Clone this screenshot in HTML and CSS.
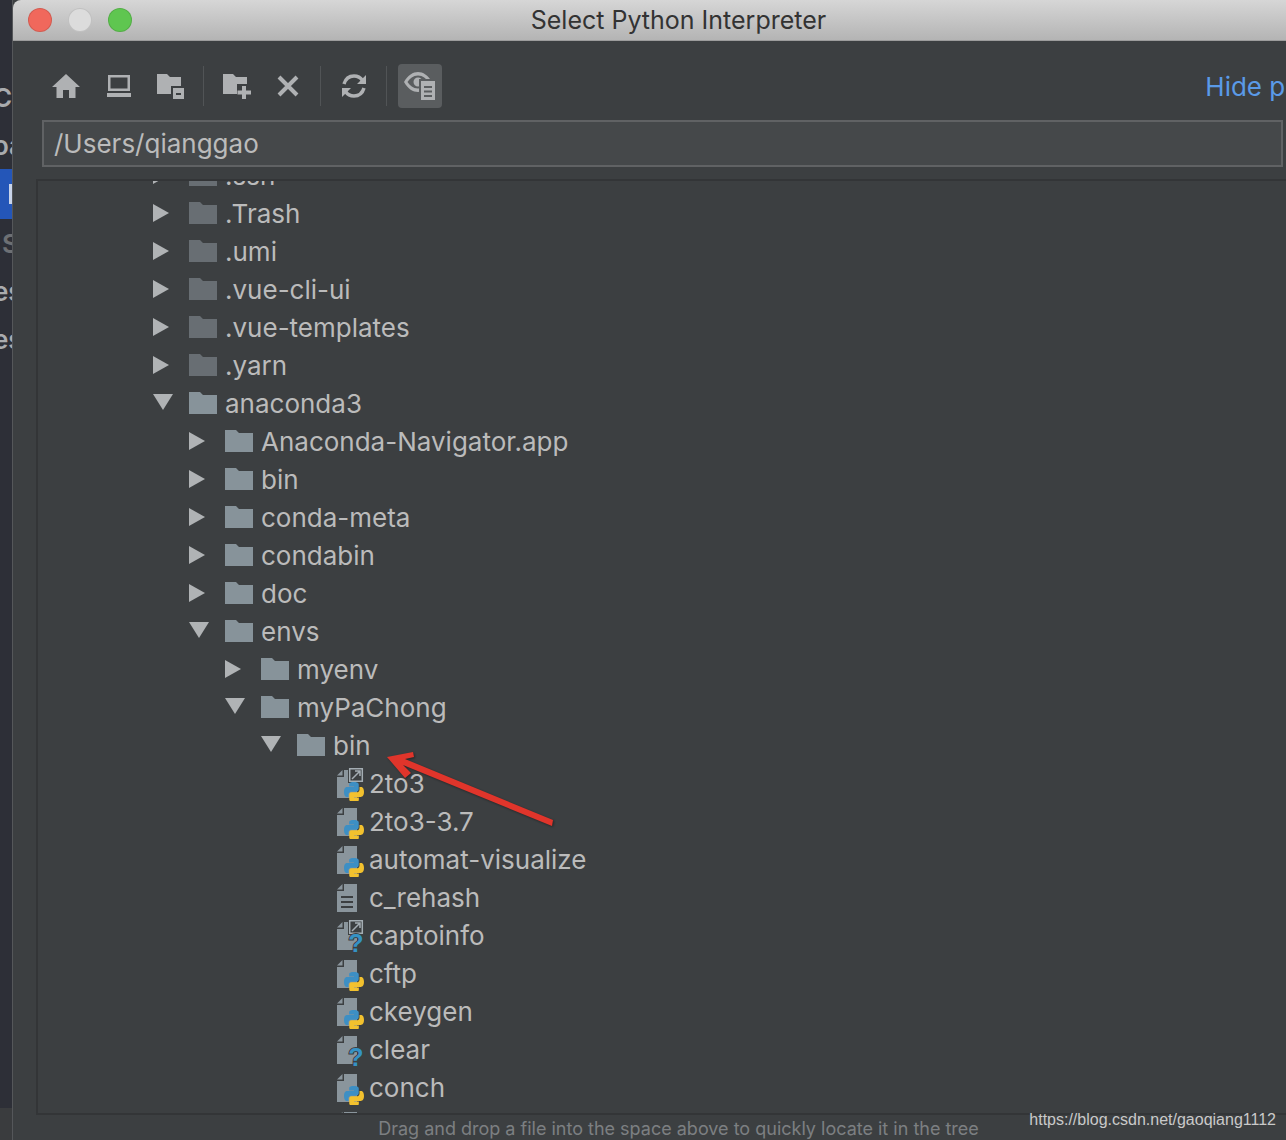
FILE: index.html
```html
<!DOCTYPE html>
<html lang="en">
  <head>
    <meta charset="UTF-8" />
    <title>Select Python Interpreter</title>
    <link rel="stylesheet" href="styles.css">
  </head>

  <body>
    <!-- icons used more than once -->
    <svg class="defs" width="0" height="0">
      <symbol id="py" viewBox="0 0 24 24">
        <path fill="#3d8fc4" d="M11.9 0C5.8 0 6.200 2.600 6.200 2.600v2.700h5.800v.8H3.900S0 5.700 0 11.900s3.400 6 3.400 6h2v-2.900s-.1-3.400 3.400-3.400h5.700s3.200.1 3.200-3.100V3.200S18.200 0 11.900 0z"/>
        <path fill="#f2c12e" d="M12.100 24c6.100 0 5.700-2.600 5.700-2.600v-2.700H12v-.8h8.100S24 18.300 24 12.100s-3.400-6-3.400-6h-2V9s.1 3.400-3.400 3.400H9.500s-3.200-.1-3.200 3.100v5.300S5.800 24 12.100 24z"/>
      </symbol>
      <symbol id="file" viewBox="0 0 28 36">
        <path fill="#8a959c" d="M7 5H20V33H0V12H7Z"/>
        <path fill="#8a959c" d="M0 10.500 5.500 5V10.500Z"/>
      </symbol>
      <symbol id="link" viewBox="0 0 28 36">
        <path fill="#3c3f41" d="M11 2H27V18H11Z"/>
        <path fill="none" stroke="#a4adb3" stroke-width="1.500" d="M12.700 3.700H25.300V16.300H12.700Z"/>
        <path fill="none" stroke="#a4adb3" stroke-width="1.500" d="M15 14 23 6M18 6H23V11"/>
      </symbol>
      <symbol id="mini-folder" viewBox="0 0 28 22">
        <path d="M0 0H11L14 3H28V22H0Z"/>
      </symbol>
    </svg>

    <!-- the settings window behind the dialog -->
    <aside class="behind">
      <div class="behind__row">Cc</div>
      <div class="behind__row">oa</div>
      <div class="behind__row behind__row--selected"><span class="behind__caret"></span></div>
      <div class="behind__row behind__row--dim">S</div>
      <div class="behind__row">es</div>
      <div class="behind__row">es</div>
      <div class="behind__foot"></div>
    </aside>

    <main class="dialog">
      <header class="titlebar">
        <div class="lights">
          <span class="light light--red"></span>
          <span class="light light--grey"></span>
          <span class="light light--green"></span>
        </div>
        <h1 class="titlebar__title">Select Python Interpreter</h1>
      </header>

      <div class="toolbar">
        <div class="tool-group tool-group--first">
          <button class="tool">
            <svg width="28" height="24" viewBox="0 0 28 24"><path d="M14 0 28 13H23.500V24H17V16H11V24H4.500V13H0Z"/></svg>
          </button>
          <button class="tool">
            <svg width="26" height="24" viewBox="0 0 26 24"><path fill-rule="evenodd" d="M2 1H24V17H2ZM4.500 3.500V14.500H21.500V3.500ZM1 19H25V23H1Z"/></svg>
          </button>
          <button class="tool">
            <svg width="28" height="26" viewBox="0 0 28 26"><path d="M0 1H10L13 4H24V21H0Z"/><path fill="#3c3f41" d="M14 13H28V26H14Z"/><path d="M16 15H27V26H16Z"/><path fill="#3c3f41" d="M19 20H24V22H19Z"/></svg>
          </button>
        </div>
        <span class="tool-sep"></span>
        <div class="tool-group">
          <button class="tool">
            <svg width="28" height="26" viewBox="0 0 28 26"><path d="M0 1H10L13 4H24V21H0Z"/><path fill="#3c3f41" d="M14 11H28V26H14Z"/><path d="M19 13H23V17.500H28V21.500H23V26H19V21.500H14.500V17.500H19Z"/></svg>
          </button>
          <button class="tool">
            <svg width="22" height="22" viewBox="0 0 22 22"><path fill="none" stroke="#afb1b3" stroke-width="4" d="M2 2 20 20M20 2 2 20"/></svg>
          </button>
        </div>
        <span class="tool-sep"></span>
        <div class="tool-group">
          <button class="tool">
            <svg width="26" height="26" viewBox="0 0 26 26"><path fill="none" stroke="#afb1b3" stroke-width="3.500" d="M3 11C4.500 6 8.500 3 13 3 16.500 3 19.500 4.500 21.500 7.500M23 15C21.500 20 17.500 23 13 23 9.500 23 6.500 21.500 4.500 18.500"/><path d="M25 2V11H16ZM1 24V15H10Z"/></svg>
          </button>
        </div>
        <span class="tool-sep"></span>
        <button class="tool tool--active">
          <svg width="32" height="28" viewBox="0 0 32 28"><path fill-rule="evenodd" d="M0 10C4 3 9 0 14 0 19 0 24 3 28 10 24 17 19 20 14 20 9 20 4 17 0 10ZM14 3.500C9 3.500 6 6.500 3.500 10 6 13.500 9 16.500 14 16.500 19 16.500 22 13.500 24.500 10 22 6.500 19 3.500 14 3.500ZM14 5.500A4.500 4.500 0 1 1 14 14.500 4.500 4.500 0 0 1 14 5.500Z"/><path fill="#5a5d5f" d="M15 7H32V28H15Z"/><path fill-rule="evenodd" d="M17 9H31V28H17ZM20 14V16H28V14ZM20 18.500V20.500H28V18.500ZM20 23V25H28V23Z"/></svg>
        </button>
        <a class="toolbar__link">Hide path</a>
      </div>

      <div class="path">/Users/qianggao</div>

      <section class="tree">
        <ul class="tree__root">
          <li><div class="row"><span class="arrow arrow--right"></span><svg class="folder folder--hidden" width="28" height="22"><use href="#mini-folder"/></svg><span class="row__name">.ssh</span></div></li>
          <li><div class="row"><span class="arrow arrow--right"></span><svg class="folder folder--hidden" width="28" height="22"><use href="#mini-folder"/></svg><span class="row__name">.Trash</span></div></li>
          <li><div class="row"><span class="arrow arrow--right"></span><svg class="folder folder--hidden" width="28" height="22"><use href="#mini-folder"/></svg><span class="row__name">.umi</span></div></li>
          <li><div class="row"><span class="arrow arrow--right"></span><svg class="folder folder--hidden" width="28" height="22"><use href="#mini-folder"/></svg><span class="row__name">.vue-cli-ui</span></div></li>
          <li><div class="row"><span class="arrow arrow--right"></span><svg class="folder folder--hidden" width="28" height="22"><use href="#mini-folder"/></svg><span class="row__name">.vue-templates</span></div></li>
          <li><div class="row"><span class="arrow arrow--right"></span><svg class="folder folder--hidden" width="28" height="22"><use href="#mini-folder"/></svg><span class="row__name">.yarn</span></div></li>
          <li>
            <div class="row"><span class="arrow arrow--down"></span><svg class="folder" width="28" height="22"><use href="#mini-folder"/></svg><span class="row__name">anaconda3</span></div>
            <ul>
              <li><div class="row"><span class="arrow arrow--right"></span><svg class="folder" width="28" height="22"><use href="#mini-folder"/></svg><span class="row__name">Anaconda-Navigator.app</span></div></li>
              <li><div class="row"><span class="arrow arrow--right"></span><svg class="folder" width="28" height="22"><use href="#mini-folder"/></svg><span class="row__name">bin</span></div></li>
              <li><div class="row"><span class="arrow arrow--right"></span><svg class="folder" width="28" height="22"><use href="#mini-folder"/></svg><span class="row__name">conda-meta</span></div></li>
              <li><div class="row"><span class="arrow arrow--right"></span><svg class="folder" width="28" height="22"><use href="#mini-folder"/></svg><span class="row__name">condabin</span></div></li>
              <li><div class="row"><span class="arrow arrow--right"></span><svg class="folder" width="28" height="22"><use href="#mini-folder"/></svg><span class="row__name">doc</span></div></li>
              <li>
                <div class="row"><span class="arrow arrow--down"></span><svg class="folder" width="28" height="22"><use href="#mini-folder"/></svg><span class="row__name">envs</span></div>
                <ul>
                  <li><div class="row"><span class="arrow arrow--right"></span><svg class="folder" width="28" height="22"><use href="#mini-folder"/></svg><span class="row__name">myenv</span></div></li>
                  <li>
                    <div class="row"><span class="arrow arrow--down"></span><svg class="folder" width="28" height="22"><use href="#mini-folder"/></svg><span class="row__name">myPaChong</span></div>
                    <ul>
                      <li>
                        <div class="row"><span class="arrow arrow--down"></span><svg class="folder" width="28" height="22"><use href="#mini-folder"/></svg><span class="row__name">bin</span></div>
                        <ul>
                          <li><div class="row"><span class="arrow"></span><svg class="file" width="28" height="36"><use href="#file"/><use href="#link"/><use href="#py" x="7" y="17" width="20" height="20"/></svg><span class="row__name">2to3</span></div></li>
                          <li><div class="row"><span class="arrow"></span><svg class="file" width="28" height="36"><use href="#file"/><use href="#py" x="7" y="17" width="20" height="20"/></svg><span class="row__name">2to3-3.7</span></div></li>
                          <li><div class="row"><span class="arrow"></span><svg class="file" width="28" height="36"><use href="#file"/><use href="#py" x="7" y="17" width="20" height="20"/></svg><span class="row__name">automat-visualize</span></div></li>
                          <li><div class="row"><span class="arrow"></span><svg class="file" width="28" height="36"><use href="#file"/><path fill="#3c3f41" d="M4 17H16V19H4ZM4 22H16V24H4ZM4 27H16V29H4Z"/></svg><span class="row__name">c_rehash</span></div></li>
                          <li><div class="row"><span class="arrow"></span><svg class="file" width="28" height="36"><use href="#file"/><use href="#link"/><text class="file__unknown" x="19" y="35">?</text></svg><span class="row__name">captoinfo</span></div></li>
                          <li><div class="row"><span class="arrow"></span><svg class="file" width="28" height="36"><use href="#file"/><use href="#py" x="7" y="17" width="20" height="20"/></svg><span class="row__name">cftp</span></div></li>
                          <li><div class="row"><span class="arrow"></span><svg class="file" width="28" height="36"><use href="#file"/><use href="#py" x="7" y="17" width="20" height="20"/></svg><span class="row__name">ckeygen</span></div></li>
                          <li><div class="row"><span class="arrow"></span><svg class="file" width="28" height="36"><use href="#file"/><text class="file__unknown" x="19" y="35">?</text></svg><span class="row__name">clear</span></div></li>
                          <li><div class="row"><span class="arrow"></span><svg class="file" width="28" height="36"><use href="#file"/><use href="#py" x="7" y="17" width="20" height="20"/></svg><span class="row__name">conch</span></div></li>
                          <li><div class="row"><span class="arrow"></span><svg class="file" width="28" height="36"><use href="#file"/></svg><span class="row__name">conda</span></div></li>
                        </ul>
                      </li>
                    </ul>
                  </li>
                </ul>
              </li>
            </ul>
          </li>
        </ul>
      </section>

      <p class="hint">Drag and drop a file into the space above to quickly locate it in the tree</p>
    </main>

    <!-- red arrow drawn on top of the screenshot -->
    <svg class="annotation" width="190" height="90" viewBox="380 745 190 90">
      <path fill="#e0352b" d="M387 757 413 752 414 757 405 759 553 820 552 826 403 765 411 773 405 778Z"/>
    </svg>

    <div class="watermark">https://blog.csdn.net/gaoqiang1112</div>
  </body>
</html>
```

FILE: styles.css
```css
html,
body {
  height: 100%;
  overflow: hidden;
}

body {
  display: flex;
  margin: 0;
  width: 1286px;
  height: 1140px;
  position: relative;
  background-color: #3c3f41;
  font-family: Inter, "Liberation Sans", sans-serif;
}

.defs {
  position: absolute;
}

/* window behind */
.behind {
  flex: 0 0 12px;
  display: flex;
  flex-direction: column;
  padding-top: 73px;
  overflow: hidden;
  background-color: #2d2f37;
  color: #a9abae;
  font-size: 26px;
  font-weight: 600;
  box-sizing: border-box;
}

.behind__row {
  flex: 0 0 48px;
  display: flex;
  align-items: center;
  margin-left: -7px;
  white-space: nowrap;
}

.behind__row--selected {
  flex-basis: 50px;
  margin-left: 0;
  justify-content: flex-end;
  background-color: #2456b8;
}

.behind__row--dim {
  margin-left: 2px;
  color: #6d7074;
}

.behind__caret {
  width: 3px;
  height: 20px;
  background-color: #c9d4ea;
}

.behind__foot {
  margin-top: auto;
  height: 32px;
  background-color: #3a3c3e;
}

/* dialog */
.dialog {
  flex: 0 0 1332px;
  display: flex;
  flex-direction: column;
  box-sizing: border-box;
  background-color: #3c3f41;
  border-left: 1px solid #55575a;
}

.titlebar {
  flex: 0 0 41px;
  display: flex;
  align-items: center;
  position: relative;
  box-sizing: border-box;
  background: linear-gradient(#d6d6d6, #b4b4b4);
  border-bottom: 1px solid #9c9c9c;
  border-top-left-radius: 8px;
}

.lights {
  display: flex;
  gap: 16px;
  padding-left: 15px;
}

.light {
  width: 24px;
  height: 24px;
  border-radius: 50%;
  box-sizing: border-box;
  border: 1px solid rgba(0, 0, 0, 0.12);
}

.light--red {
  background-color: #f0685c;
}

.light--grey {
  background-color: #dcdcdc;
}

.light--green {
  background-color: #5fc650;
}

.titlebar__title {
  position: absolute;
  left: 0;
  right: 0;
  margin: 0;
  text-align: center;
  font-size: 25px;
  font-weight: 400;
  color: #333;
}

.toolbar {
  display: flex;
  align-items: center;
  height: 44px;
  margin-top: 23px;
  padding-left: 31px;
}

.tool-group {
  display: flex;
  gap: 7px;
}

.tool-group--first {
  gap: 8.5px;
}

.tool {
  width: 44px;
  height: 44px;
  display: flex;
  align-items: center;
  justify-content: center;
  padding: 0;
  border: none;
  border-radius: 4px;
  background: none;
}

.tool svg {
  fill: #afb1b3;
}

.tool--active {
  background-color: #5a5d5f;
}

.tool-sep {
  width: 1px;
  height: 40px;
  margin: 0 11px 0 10px;
  background-color: #515456;
}

.toolbar__link {
  margin-left: auto;
  padding-right: 20px;
  font-size: 26px;
  color: #5a9ae8;
}

.path {
  width: 1241px;
  height: 47px;
  margin: 12px 0 0 29px;
  padding-left: 10px;
  box-sizing: border-box;
  display: flex;
  align-items: center;
  background-color: #45484a;
  border: 2px solid #606264;
  font-size: 26px;
  color: #bbbbbb;
}

.tree {
  flex: 0 0 936px;
  margin: 12px 0 0 23px;
  overflow: hidden;
  box-sizing: border-box;
  border: solid #333537;
  border-width: 2px 0 2px 2px;
}

.tree ul {
  list-style: none;
  margin: 0;
  padding: 0 0 0 36px;
}

.tree .tree__root {
  margin-top: -25px;
  padding-left: 114px;
}

.row {
  display: flex;
  align-items: center;
  height: 38px;
  font-size: 26px;
  color: #bbbbbb;
  white-space: nowrap;
}

.row__name {
  margin-left: 8px;
}

.arrow {
  flex: 0 0 37px;
  box-sizing: border-box;
  width: 37px;
  height: 0;
  position: relative;
}

.arrow--right::before,
.arrow--down::before {
  content: "";
  position: absolute;
  width: 0;
  height: 0;
  border-style: solid;
  border-color: transparent;
}

.arrow--right::before {
  left: 1px;
  top: -9px;
  border-width: 9px 0 9px 16px;
  border-left-color: #b0b3b5;
}

.arrow--down::before {
  left: 1px;
  top: -9px;
  border-width: 16px 10px 0 10px;
  border-top-color: #b0b3b5;
}

.folder {
  flex: 0 0 28px;
  fill: #87939a;
}

.folder--hidden {
  fill: #686e73;
}

.file {
  flex: 0 0 28px;
  margin-left: 4px;
  margin-right: -4px;
}

.file + .row__name {
  margin-left: 8px;
}

.file__unknown {
  font-family: "Liberation Sans", sans-serif;
  font-size: 25px;
  font-weight: 700;
  text-anchor: middle;
  fill: #3592c4;
  stroke: #3c3f41;
  stroke-width: 2px;
  paint-order: stroke;
}

.hint {
  margin: 3px 0 0;
  text-align: center;
  font-size: 18px;
  color: #7c7f82;
}

.annotation {
  position: absolute;
  left: 380px;
  top: 745px;
  filter: drop-shadow(1px 1px 1px rgba(0, 0, 0, 0.4));
}

.watermark {
  position: absolute;
  right: 10px;
  top: 1111px;
  font-family: "Liberation Sans", sans-serif;
  font-size: 16px;
  color: #c9c9c9;
}
```
